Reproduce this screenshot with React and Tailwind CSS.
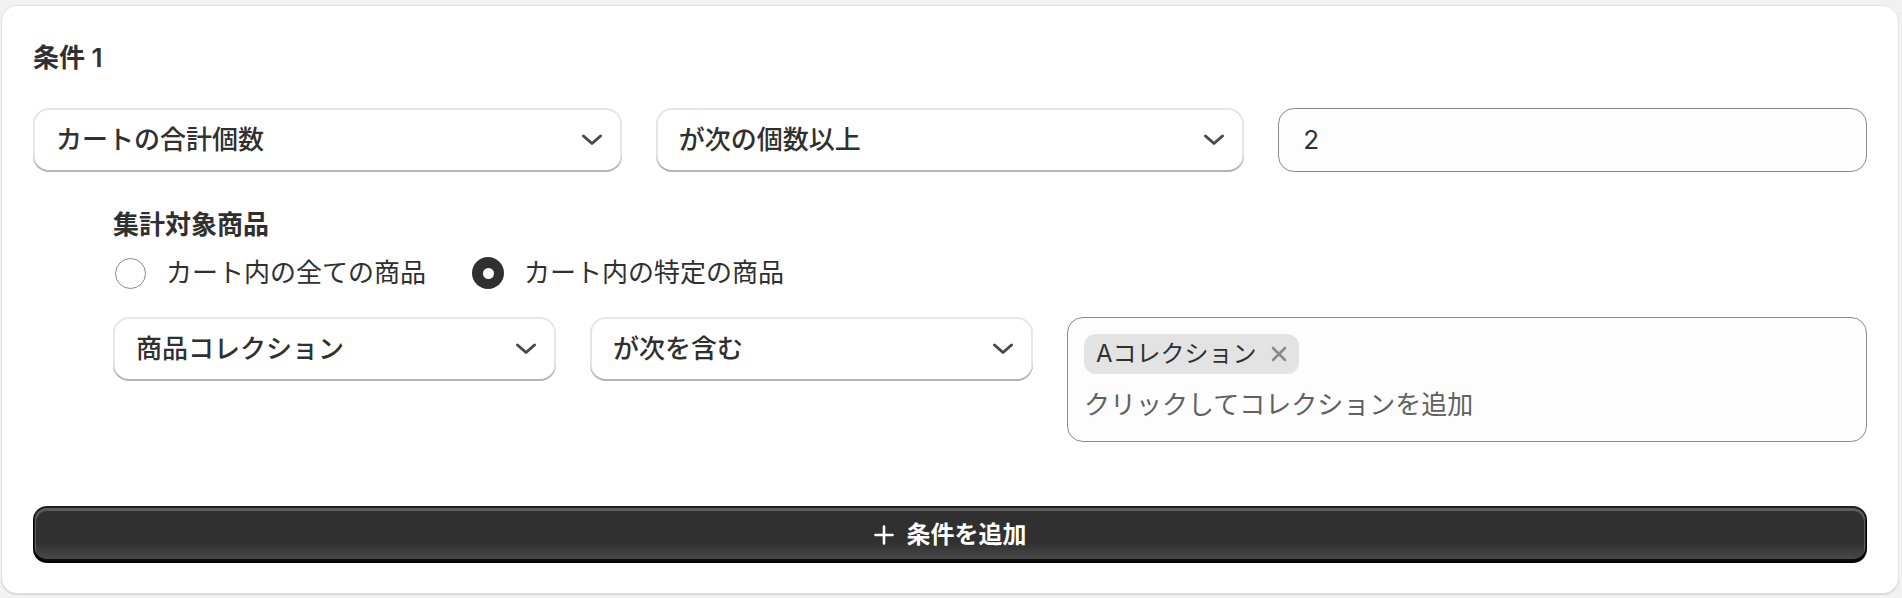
import React from "react";

const FONT = { fontFamily: 'Inter, "Noto Sans CJK JP", sans-serif' };

function Chevron() {
  return (
    <svg width="22" height="12" viewBox="0 0 22 12" fill="none" className="shrink-0">
      <path d="M2.5 2 L11 9.5 L19.5 2" stroke="#4a4a4a" strokeWidth="3" strokeLinecap="round" strokeLinejoin="round" />
    </svg>
  );
}

function Select({ label }) {
  return (
    <div className="flex h-[64px] items-center justify-between rounded-[16px] bg-white pl-[23px] pr-[19px] shadow-[inset_0_-2px_0_0_#b5b5b5,inset_0_0_0_2px_rgba(0,0,0,0.1),inset_0_1px_0_3px_#fff]">
      <span className="text-[26px] leading-[32px] font-medium text-[#303030]">{label}</span>
      <Chevron />
    </div>
  );
}

function Radio({ checked, label }) {
  return (
    <div className="flex items-center gap-[20px]">
      {checked ? (
        <span className="flex h-[32px] w-[32px] items-center justify-center rounded-full bg-[#303030]">
          <span className="h-[11px] w-[11px] rounded-full bg-white" />
        </span>
      ) : (
        <span className="h-[31px] w-[31px] rounded-full border-[1.5px] border-[#8a8a8a] bg-white" />
      )}
      <span className="text-[26px] leading-[32px] text-[#303030]">{label}</span>
    </div>
  );
}

export default function App() {
  return (
    <div className="h-[598px] w-[1902px] bg-[#f1f1f1] pl-[1px] pr-[3px] pt-[5px]" style={FONT}>
      <div className="rounded-[16px] border border-[#e3e3e3] bg-white px-[31px] pb-[30px] pt-[36px] text-[#303030] shadow-[0_1px_0_0_#d4d4d4]">
        <h2 className="text-[26px] leading-[32px] font-semibold">条件 1</h2>

        <div className="mt-[34px] grid grid-cols-3 gap-[34px]">
          <Select label="カートの合計個数" />
          <Select label="が次の個数以上" />
          <div className="flex h-[64px] items-center rounded-[16px] border border-[#8a8a8a] bg-[#fdfdfd] pl-[24px]">
            <span className="text-[26px] leading-[32px] text-[#303030]">2</span>
          </div>
        </div>

        <div className="ml-[80px] mt-[37px]">
          <div className="text-[26px] leading-[32px] font-semibold">集計対象商品</div>
          <div className="ml-[2px] mt-[16px] flex items-center gap-[46px]">
            <Radio label="カート内の全ての商品" />
            <Radio checked label="カート内の特定の商品" />
          </div>

          <div className="mt-[28px] grid grid-cols-[443px_443px_1fr] items-start gap-[34px]">
            <Select label="商品コレクション" />
            <Select label="が次を含む" />
            <div className="rounded-[16px] border border-[#8a8a8a] bg-[#fdfdfd] pb-[20px] pl-[16px] pr-[16px] pt-[16px]">
              <div className="flex">
                <span className="flex h-[40px] items-center gap-[14px] rounded-[12px] bg-[#e3e3e3] pl-[12px] pr-[12px]">
                  <span className="text-[24px] leading-[32px] text-[#303030]">Aコレクション</span>
                  <svg width="16" height="16" viewBox="0 0 16 16" fill="none">
                    <path d="M2 2 L14 14 M14 2 L2 14" stroke="#8a8a8a" strokeWidth="2.6" strokeLinecap="round" />
                  </svg>
                </span>
              </div>
              <div className="mt-[15px] text-[26px] leading-[32px] text-[#616161]">クリックしてコレクションを追加</div>
            </div>
          </div>
        </div>

        <button className="mt-[64px] flex h-[57px] w-full items-center justify-center gap-[13px] rounded-[14px] bg-[#303030] bg-[linear-gradient(180deg,rgba(48,48,48,0)_63.53%,rgba(255,255,255,0.15)_100%)] text-white shadow-[inset_0_-3px_0_1px_rgba(0,0,0,0.85),inset_0_0_0_2px_#1f1f1f,inset_0_2px_0_3px_rgba(255,255,255,0.22)]">
          <svg width="20" height="20" viewBox="0 0 20 20" fill="none">
            <path d="M10 1.5 V18.5 M1.5 10 H18.5" stroke="#fff" strokeWidth="2.6" strokeLinecap="round" />
          </svg>
          <span className="text-[24px] leading-[32px] font-semibold">条件を追加</span>
        </button>
      </div>
    </div>
  );
}
